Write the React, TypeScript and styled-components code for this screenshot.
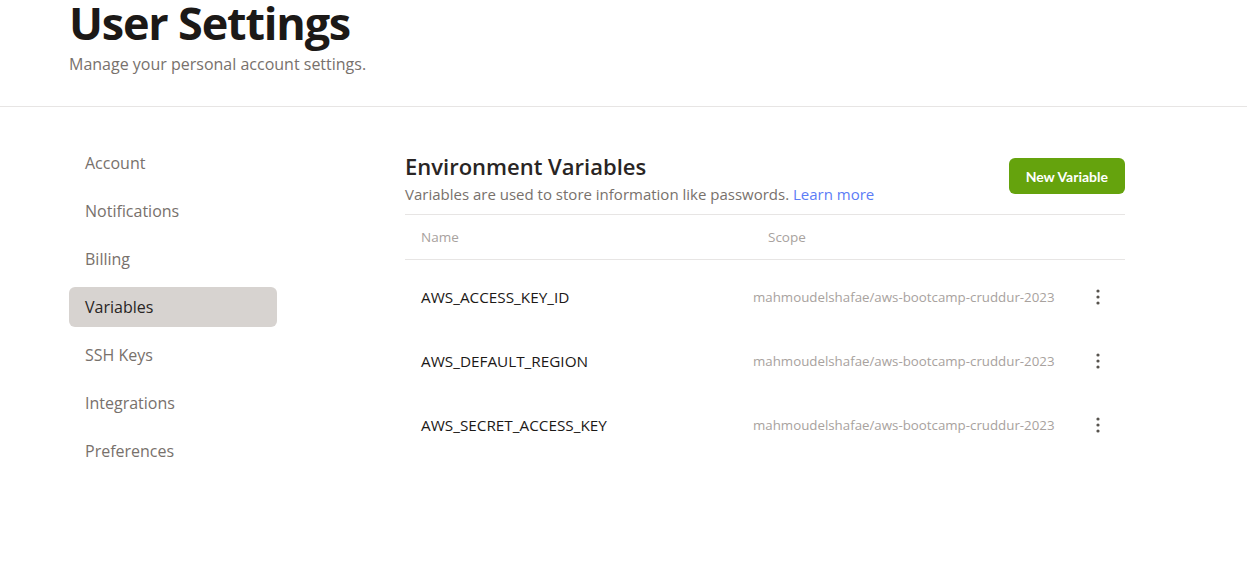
import React from 'react';
import styled, { createGlobalStyle } from 'styled-components';

const GlobalStyle = createGlobalStyle`
  body {
    margin: 0;
    background: #ffffff;
    font-family: "Open Sans", "Noto Sans", sans-serif;
    color: #1c1917;
  }
  * { box-sizing: border-box; }
`;

const Page = styled.div`
  width: 100%;
  min-height: 566px;
`;

const Header = styled.header`
  padding: 0 0 31px 69px;
  border-bottom: 1px solid #e7e5e4;
`;

const Title = styled.h1`
  margin: 0;
  font-size: 45px;
  line-height: 46px;
  font-weight: 700;
  letter-spacing: -1.2px;
  color: #1c1917;
`;

const Subtitle = styled.p`
  margin: 7px 0 0;
  font-size: 16px;
  line-height: 22px;
  color: #78716c;
`;

const Body = styled.div`
  display: flex;
  padding: 36px 0 0 69px;
`;

const Nav = styled.nav`
  width: 208px;
  display: flex;
  flex-direction: column;
  gap: 8px;
`;

const NavItem = styled.a<{ $active?: boolean }>`
  display: flex;
  align-items: center;
  height: 40px;
  padding: 0 16px;
  border-radius: 6px;
  font-size: 16px;
  color: ${({ $active }) => ($active ? '#292524' : '#78716c')};
  background: ${({ $active }) => ($active ? '#d7d3d0' : 'transparent')};
  text-decoration: none;
  cursor: pointer;
`;

const Main = styled.main`
  width: 720px;
  margin-left: 128px;
`;

const SectionHead = styled.div`
  display: flex;
  justify-content: space-between;
  align-items: flex-start;
  padding: 8px 0 8px;
  border-bottom: 1px solid #e7e5e4;
`;

const SectionTitle = styled.h2`
  margin: 0;
  font-size: 22px;
  line-height: 30px;
  font-weight: 600;
  color: #292524;
`;

const SectionText = styled.p`
  margin: 1px 0 0;
  font-size: 15px;
  line-height: 24px;
  color: #78716c;
`;

const Link = styled.a`
  color: #5b7cf6;
  text-decoration: none;
`;

const PrimaryButton = styled.button`
  margin-top: 7px;
  height: 36px;
  padding: 0 17px;
  border: none;
  border-radius: 6px;
  background: #65a30d;
  color: #ffffff;
  font-family: "Lato", sans-serif;
  font-weight: 700;
  font-size: 14px;
  cursor: pointer;
`;

const HeadRow = styled.div`
  display: grid;
  grid-template-columns: 332px 1fr 40px;
  align-items: center;
  height: 45px;
  padding: 0 16px;
  border-bottom: 1px solid #e7e5e4;
`;

const Rows = styled.div`
  padding-top: 5px;
`;

const Row = styled.div`
  display: grid;
  grid-template-columns: 332px 1fr 40px;
  align-items: center;
  height: 64px;
  padding: 0 16px;
`;

const HeadCell = styled.span<{ $indent?: number }>`
  font-size: 13.5px;
  color: #a8a29e;
  padding-left: ${({ $indent }) => $indent || 0}px;
`;

const NameCell = styled.span`
  font-size: 15.3px;
  color: #1c1917;
`;

const ScopeCell = styled.span`
  font-size: 13.3px;
  color: #a8a29e;
`;

const MenuButton = styled.button`
  justify-self: end;
  width: 24px;
  height: 24px;
  margin-right: -1px;
  padding: 0;
  border: none;
  background: transparent;
  display: flex;
  align-items: center;
  justify-content: center;
  cursor: pointer;
`;

const Kebab = () => (
  <svg width="4" height="16" viewBox="0 0 4 16">
    <circle cx="2" cy="2" r="1.6" fill="#57534e" />
    <circle cx="2" cy="8" r="1.6" fill="#57534e" />
    <circle cx="2" cy="14" r="1.6" fill="#57534e" />
  </svg>
);

const navItems = ['Account', 'Notifications', 'Billing', 'Variables', 'SSH Keys', 'Integrations', 'Preferences'];

const variables = [
  { name: 'AWS_ACCESS_KEY_ID', scope: 'mahmoudelshafae/aws-bootcamp-cruddur-2023' },
  { name: 'AWS_DEFAULT_REGION', scope: 'mahmoudelshafae/aws-bootcamp-cruddur-2023' },
  { name: 'AWS_SECRET_ACCESS_KEY', scope: 'mahmoudelshafae/aws-bootcamp-cruddur-2023' },
];

export default function App() {
  return (
    <Page>
      <GlobalStyle />
      <Header>
        <Title>User Settings</Title>
        <Subtitle>Manage your personal account settings.</Subtitle>
      </Header>
      <Body>
        <Nav>
          {navItems.map((item) => (
            <NavItem key={item} $active={item === 'Variables'}>
              {item}
            </NavItem>
          ))}
        </Nav>
        <Main>
          <SectionHead>
            <div>
              <SectionTitle>Environment Variables</SectionTitle>
              <SectionText>
                Variables are used to store information like passwords. <Link>Learn more</Link>
              </SectionText>
            </div>
            <PrimaryButton>New Variable</PrimaryButton>
          </SectionHead>
          <HeadRow>
            <HeadCell>Name</HeadCell>
            <HeadCell $indent={15}>Scope</HeadCell>
            <span />
          </HeadRow>
          <Rows>
            {variables.map((v) => (
              <Row key={v.name}>
                <NameCell>{v.name}</NameCell>
                <ScopeCell>{v.scope}</ScopeCell>
                <MenuButton>
                  <Kebab />
                </MenuButton>
              </Row>
            ))}
          </Rows>
        </Main>
      </Body>
    </Page>
  );
}
